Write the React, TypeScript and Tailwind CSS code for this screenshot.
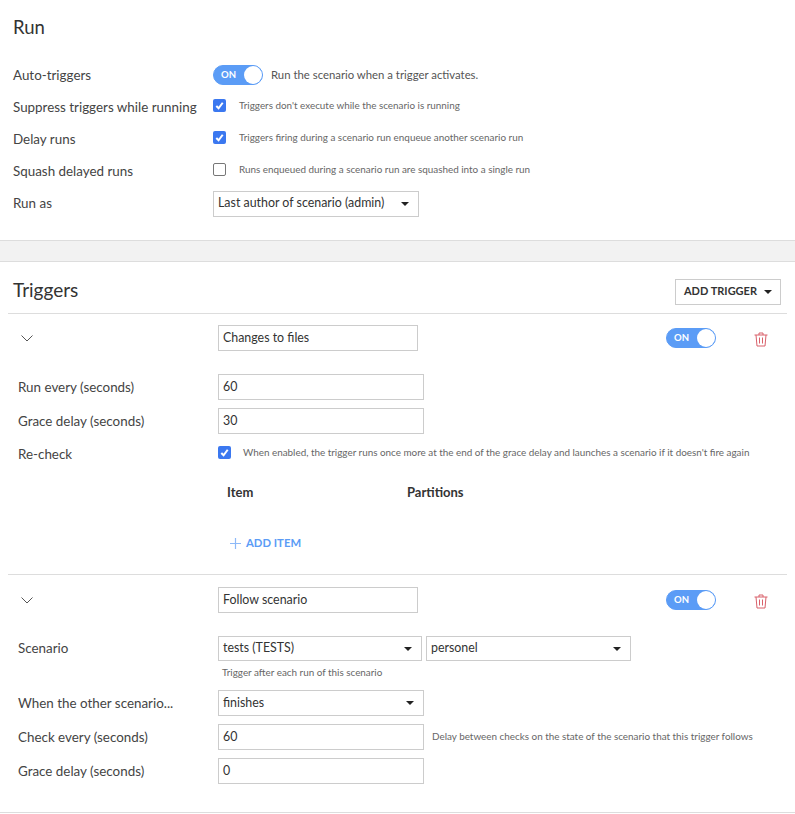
const FONT = "font-['Lato','Noto_Sans',sans-serif]";

function Toggle() {
  return (
    <div className="flex h-[20px] w-[50px] shrink-0 items-center justify-between rounded-full border border-[#5b9cf6] bg-[#5b9cf6] pl-[7px]">
      <span className="text-[9.5px] font-bold text-white">ON</span>
      <span className="h-[18px] w-[18px] rounded-full bg-white" />
    </div>
  );
}

function Check({ on }: { on: boolean }) {
  return on ? (
    <span className="mb-[4px] flex h-[13px] w-[13px] shrink-0 items-center justify-center rounded-[2px] bg-[#3b78f0]">
      <svg width="11" height="11" viewBox="0 0 12 12" fill="none" stroke="white" strokeWidth="2.2">
        <path d="M2.5 6.5 5 9l4.5-6" />
      </svg>
    </span>
  ) : (
    <span className="mb-[4px] h-[13px] w-[13px] shrink-0 rounded-[2px] border border-[#777] bg-white" />
  );
}

function Caret() {
  return <span className="h-0 w-0 border-x-[4px] border-t-[4px] border-x-transparent border-t-[#222]" />;
}

function Box({ w, text }: { w: string; text: string }) {
  return (
    <div className={`flex h-[26px] ${w} shrink-0 items-center border border-[#ccc] bg-white px-[4px] text-[12.4px] text-[#333]`}>
      {text}
    </div>
  );
}

function Select({ w, text, gap, h = "h-[26px]" }: { w: string; text: string; gap?: string; h?: string }) {
  return (
    <div className={`flex ${h} ${w} shrink-0 items-center justify-between border border-[#ccc] bg-white pl-[4px] pr-[9px] text-[12.4px] text-[#333] ${gap ?? ""}`}>
      <span>{text}</span>
      <Caret />
    </div>
  );
}

function Row({ label, children, cls }: { label: string; children: React.ReactNode; cls: string }) {
  return (
    <div className={`flex items-center ${cls}`}>
      <div className="w-[200px] shrink-0 whitespace-nowrap text-[13.4px] text-[#444]">{label}</div>
      {children}
    </div>
  );
}

function Help({ text, cls = "ml-[8px]" }: { text: string; cls?: string }) {
  return <span className={`whitespace-nowrap text-[9.9px] text-[#666] ${cls}`}>{text}</span>;
}

function TriggerHead({ name }: { name: string }) {
  return (
    <div className="flex h-[26px] items-center pl-[13px]">
      <svg width="12" height="7" viewBox="0 0 12 7" fill="none" stroke="#555" strokeWidth="1" className="mr-[185px]">
        <path d="M.5.5 6 6 11.5.5" />
      </svg>
      <Box w="w-[200px]" text={name} />
      <div className="ml-[248px]"><Toggle /></div>
      <svg width="14" height="15" viewBox="0 0 14 15" fill="none" stroke="#d9606a" strokeWidth="1" className="ml-[38px] mt-[2px]">
        <path d="M.5 3h13M2 3l1 11h8l1-11M5 3V1h4v2M5.5 5.5v6M8.5 5.5v6" />
      </svg>
    </div>
  );
}

export default function App() {
  return (
    <div className={`h-[814px] w-[795px] overflow-hidden bg-white ${FONT}`}>
      <div className="h-[240px] px-[13px] pt-[16px]">
        <h1 className="h-[24px] text-[18.5px] leading-[22px] text-[#333]">Run</h1>
        <div className="mt-[19px] flex flex-col">
          <Row label="Auto-triggers" cls="h-[32px]">
            <Toggle />
            <span className="ml-[8px] whitespace-nowrap text-[11.35px] text-[#555]">Run the scenario when a trigger activates.</span>
          </Row>
          <Row label="Suppress triggers while running" cls="h-[32px]">
            <Check on />
            <Help text="Triggers don't execute while the scenario is running" cls="mb-[4px] ml-[13px]" />
          </Row>
          <Row label="Delay runs" cls="h-[32px]">
            <Check on />
            <Help text="Triggers firing during a scenario run enqueue another scenario run" cls="mb-[4px] ml-[13px]" />
          </Row>
          <Row label="Squash delayed runs" cls="h-[32px]">
            <Check on={false} />
            <Help text="Runs enqueued during a scenario run are squashed into a single run" cls="mb-[4px] ml-[13px]" />
          </Row>
          <Row label="Run as" cls="h-[32px]">
            <Select w="w-[206px]" gap="mt-[1px]" text="Last author of scenario (admin)" />
          </Row>
        </div>
      </div>

      <div className="h-[22px] border-y border-[#ddd] bg-[#f2f2f2]" />

      <div className="flex h-[51px] items-center justify-between pl-[13px] pr-[14px] pt-[8px]">
        <h2 className="mb-[2px] text-[19px] text-[#333]">Triggers</h2>
        <div className="flex h-[26px] w-[106px] items-center justify-center gap-[7px] border border-[#ccc] text-[11px] font-bold text-[#333]">
          ADD TRIGGER <Caret />
        </div>
      </div>

      <div className="mx-[8px] border-t border-[#ddd] pt-[11px]">
        <TriggerHead name="Changes to files" />
        <div className="mt-[23px] pl-[10px]">
          <Row label="Run every (seconds)" cls="h-[26px]"><Box w="w-[206px]" text="60" /></Row>
          <Row label="Grace delay (seconds)" cls="mt-[8px] h-[26px]"><Box w="w-[206px]" text="30" /></Row>
          <Row label="Re-check" cls="mt-[7px] h-[26px]">
            <Check on />
            <Help text="When enabled, the trigger runs once more at the end of the grace delay and launches a scenario if it doesn't fire again" cls="mb-[4px] ml-[12px]" />
          </Row>
          <div className="ml-[209px] mt-[16px] flex h-[20px] items-center text-[13px] font-bold text-[#333]">
            <span className="w-[180px]">Item</span>
            <span>Partitions</span>
          </div>
          <div className="ml-[212px] mt-[30px] flex h-[20px] items-center gap-[5px] text-[11.3px] font-bold text-[#5b9cf6]">
            <svg width="11" height="11" viewBox="0 0 11 11" stroke="#8db9f8" strokeWidth="1.2"><path d="M5.5 0v11M0 5.5h11" /></svg>
            ADD ITEM
          </div>
        </div>
      </div>

      <div className="mx-[8px] mt-[21px] border-t border-[#ddd] pt-[12px]">
        <TriggerHead name="Follow scenario" />
        <div className="mt-[23px] pl-[10px]">
          <Row label="Scenario" cls="h-[25px]">
            <Select w="w-[204px]" h="h-[25px]" text="tests (TESTS)" />
            <Select w="w-[205px]" h="h-[25px]" text="personel" gap="ml-[4px]" />
          </Row>
          <div className="ml-[204px] mt-[4px] h-[14px] text-[9.9px] leading-[14px] text-[#666]">Trigger after each run of this scenario</div>
          <Row label="When the other scenario..." cls="mt-[11px] h-[26px]"><Select w="w-[206px]" text="finishes" /></Row>
          <Row label="Check every (seconds)" cls="mt-[8px] h-[26px]">
            <Box w="w-[206px]" text="60" />
            <Help text="Delay between checks on the state of the scenario that this trigger follows" cls="mb-[2px] ml-[8px]" />
          </Row>
          <Row label="Grace delay (seconds)" cls="mt-[8px] h-[26px]"><Box w="w-[206px]" text="0" /></Row>
        </div>
      </div>

      <div className="mt-[28px] border-t border-[#ddd]" />
    </div>
  );
}
